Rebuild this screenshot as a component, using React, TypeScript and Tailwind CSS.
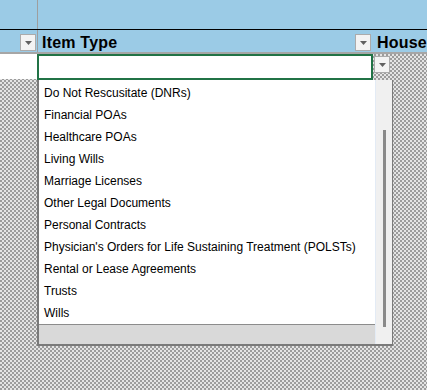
import React from 'react';

const items = [
    'Do Not Rescusitate (DNRs)',
    'Financial POAs',
    'Healthcare POAs',
    'Living Wills',
    'Marriage Licenses',
    'Other Legal Documents',
    'Personal Contracts',
    "Physician's Orders for Life Sustaining Treatment (POLSTs)",
    'Rental or Lease Agreements',
    'Trusts',
    'Wills',
];

const checker =
    'bg-[repeating-conic-gradient(#9c9c9c_0%_25%,#e4e4e4_0%_50%)] bg-[length:4px_4px]';

const FilterButton: React.FC = () => (
    <div className="flex h-[17px] w-[16px] items-center justify-center border border-[#ababab] bg-[#f3f3f3]">
        <svg width="7" height="4" viewBox="0 0 7 4">
            <path d="M0 0h7L3.5 4z" fill="#606060"/>
        </svg>
    </div>
);

const App: React.FC = () => {
    return (
        <div className="relative h-[390px] w-[427px] overflow-hidden bg-white font-['Liberation_Sans',sans-serif] text-black">
            {/* top band */}
            <div className="flex h-[30px] border-b border-black bg-[#9bcbe6]">
                <div className="w-[38px] border-r border-[#9e9e9e]"/>
            </div>

            {/* header row */}
            <div className="flex h-[24px] border-b-2 border-[#a6a6a6] bg-[#9bcbe6]">
                <div className="flex w-[38px] items-end justify-end border-r border-[#9e9e9e] pb-[1px] pr-[1px]">
                    <FilterButton/>
                </div>
                <div className="flex w-[335px] items-center justify-between pl-[4px] pr-[2px] pt-[3px]">
                    <span className="text-[16px] font-bold tracking-[0.2px]">Item Type</span>
                    <div className="self-end pb-[1px]"><FilterButton/></div>
                </div>
                <div className="flex items-center pl-[4px] pt-[3px]">
                    <span className="text-[16px] font-bold tracking-[0.2px]">House</span>
                </div>
            </div>

            {/* body */}
            <div className={`relative flex h-[336px] ${checker}`}>
                <div className="h-[25px] w-[37px] bg-white"/>
                <div className="h-[26px] w-[336px] border-2 border-[#217346] bg-white"/>
                <div className="ml-[1px] mt-[2px]">
                    <FilterButton/>
                </div>

                {/* dropdown list */}
                <div className="absolute left-[37px] top-[26px] flex h-[266px] w-[356px] border-b-2 border-l-2 border-r border-[#7a7a7a] bg-white">
                    <div className="flex flex-1 flex-col">
                        <div className="flex flex-1 flex-col pt-[2px]">
                            {items.map((item) => (
                                <div key={item} className="flex h-[22px] items-center pl-[5px] text-[12px]">
                                    {item}
                                </div>
                            ))}
                        </div>
                        <div className="h-[22px] border-t border-[#8c8c8c] bg-[#d9d9d9]"/>
                    </div>
                    <div className="flex w-[17px] justify-center border-l border-[#e3ebf5] bg-[#f0f0f0] pt-[50px]">
                        <div className="h-[197px] w-[3px] bg-[#8a8a8a]"/>
                    </div>
                </div>
            </div>
        </div>
    );
};

export default App;
